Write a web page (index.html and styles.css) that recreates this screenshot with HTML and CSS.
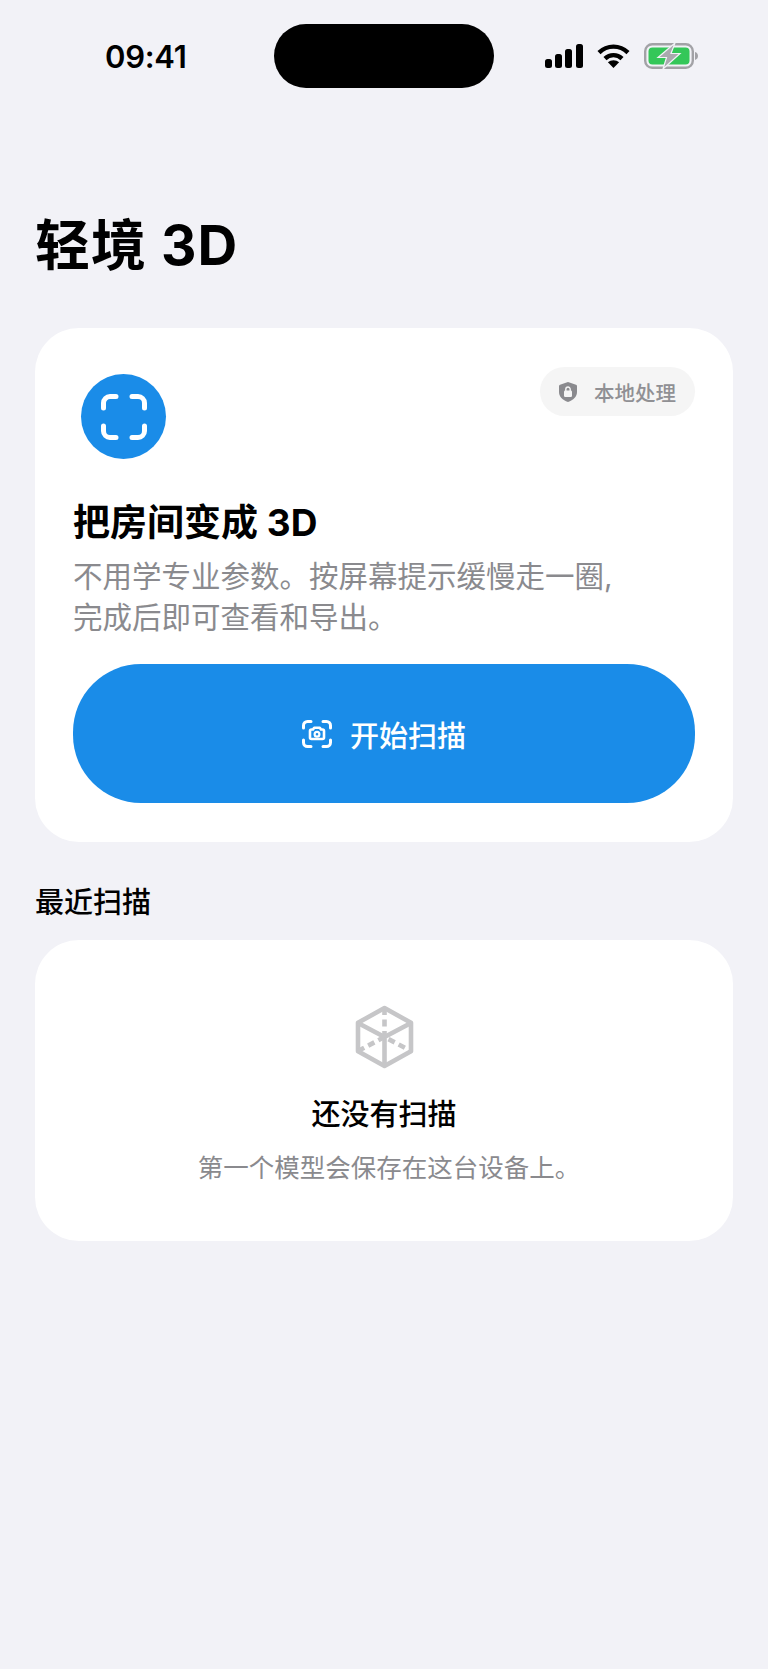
FILE: index.html
```html
<!DOCTYPE html>
<html lang="zh-CN">
<head>
    <meta charset="UTF-8">
    <meta name="viewport" content="width=device-width, initial-scale=1.0">
    <title>轻境 3D</title>
    <link rel="stylesheet" href="styles.css">
</head>
<body>
    <!-- Status bar -->
    <header class="status-bar">
        <span class="status-time">09:41</span>
        <div class="island"></div>
        <div class="status-icons">
            <svg class="icon-signal" width="38" height="24" viewBox="0 0 38 24" fill="#000">
                <rect x="0" y="15" width="7" height="9" rx="2.5"/>
                <rect x="10" y="10" width="7" height="14" rx="2.5"/>
                <rect x="20" y="5" width="7" height="19" rx="2.5"/>
                <rect x="31" y="0" width="7" height="24" rx="2.5"/>
            </svg>
            <svg class="icon-wifi" width="33" height="24" viewBox="0 0 33 24" fill="none" stroke="#000" stroke-width="4.4">
                <path d="M2 8.6C10.2 .6 22.8 .6 31 8.6"/>
                <path d="M8 14.6C12.8 10 20.2 10 25 14.6"/>
                <path d="M16.5 24l-5.6-5.7c3-2.7 8.2-2.7 11.2 0z" fill="#000" stroke="none"/>
            </svg>
            <svg class="icon-battery" width="54" height="26" viewBox="0 0 54 26">
                <rect x="1.2" y="1.2" width="47.6" height="23.6" rx="7" fill="none" stroke="#a2a2a6" stroke-width="2.4"/>
                <rect x="4.5" y="4.5" width="41" height="17" rx="4" fill="#34c759"/>
                <path d="M51 9c2 .6 3 2.2 3 4s-1 3.4-3 4z" fill="#a2a2a6"/>
                <path d="M31 0L14 14.500h8.500L19 26l17-15.500h-9z" fill="#a9a9ae" stroke="#f2f2f7" stroke-width="1.200"/>
            </svg>
        </div>
    </header>

    <main class="page">
        <h1 class="page-title">轻境 3D</h1>

        <section class="card scan-card">
            <div class="local-chip">
                <svg width="18" height="20" viewBox="0 0 18 20">
                    <path d="M9 0l8 2.800c.6.200 1 .800 1 1.400v5.800c0 4.600-3.600 8-9 10-5.400-2-9-5.400-9-10V4.200c0-.6.400-1.200 1-1.400z" fill="#8a8a8e"/>
                    <rect x="5" y="8.500" width="8" height="6.500" rx="1.200" fill="#f5f5f5"/>
                    <path d="M6.800 9V7.200a2.200 2.200 0 0 1 4.400 0V9" fill="none" stroke="#f5f5f5" stroke-width="1.400"/>
                </svg>
                <span>本地处理</span>
            </div>

            <div class="scan-badge">
                <svg width="46" height="46" viewBox="0 0 46 46" fill="none" stroke="#fff" stroke-width="5" stroke-linecap="round">
                    <path d="M2.500 14V9a6.500 6.500 0 0 1 6.500-6.500h6"/>
                    <path d="M31 2.500h6a6.500 6.500 0 0 1 6.500 6.500v5"/>
                    <path d="M2.500 32v5a6.500 6.500 0 0 0 6.500 6.500h6"/>
                    <path d="M31 43.500h6a6.500 6.500 0 0 0 6.500-6.500v-5"/>
                </svg>
            </div>

            <h2 class="scan-title">把房间变成 3D</h2>
            <p class="scan-desc">不用学专业参数。按屏幕提示缓慢走一圈,<br>完成后即可查看和导出。</p>

            <button class="start-button">
                <svg width="30" height="28" viewBox="0 0 30 28" fill="none" stroke="#fff" stroke-width="3" stroke-linecap="round" stroke-linejoin="round">
                    <path d="M1.500 8V5.500a4 4 0 0 1 4-4H9"/>
                    <path d="M21 1.500h3.500a4 4 0 0 1 4 4V8"/>
                    <path d="M1.500 20v2.500a4 4 0 0 0 4 4H9"/>
                    <path d="M21 26.500h3.500a4 4 0 0 0 4-4V20"/>
                    <path d="M9.500 9.500h1.500l1.200-1.800h5.600L19 9.500h1.500A1.500 1.500 0 0 1 22 11v6.500a1.500 1.500 0 0 1-1.500 1.500h-11A1.500 1.500 0 0 1 8 17.500V11a1.500 1.500 0 0 1 1.500-1.500z" stroke-width="2.600"/>
                    <circle cx="15" cy="14.200" r="2.400" stroke-width="2.200"/>
                </svg>
                <span>开始扫描</span>
            </button>
        </section>

        <h3 class="section-label">最近扫描</h3>

        <section class="card empty-card">
            <svg class="empty-icon" width="59" height="64" viewBox="0 0 59 64" fill="none" stroke="#c6c6c8" stroke-width="4.600" stroke-linejoin="round">
                <path d="M29.500 3L56 17.800V46.200L29.500 61L3 46.200V17.800z"/>
                <path d="M3 18L29.500 32L56 18M29.500 32V61"/>
                <path d="M29.500 3V32M3 46L29.500 32L56 46" stroke-dasharray="7 4.500"/>
            </svg>
            <h4 class="empty-title">还没有扫描</h4>
            <p class="empty-desc">第一个模型会保存在这台设备上。</p>
        </section>
    </main>
</body>
</html>
```

FILE: styles.css
```css
/* Reset */
* {
    margin: 0;
    padding: 0;
    box-sizing: border-box;
}

html, body {
    height: 100%;
}

body {
    background: #f2f2f7;
    color: #000;
    font-family: Inter, "Noto Sans CJK SC", sans-serif;
}

/* Status bar */
.status-bar {
    display: grid;
    grid-template-columns: 274px 220px 1fr;
    align-items: center;
    padding-top: 24px;
}

.status-time {
    padding-left: 105px;
    font-size: 31px;
    font-weight: 600;
    letter-spacing: -0.3px;
}

.island {
    height: 64px;
    background: #000;
    border-radius: 32px;
}

.status-icons {
    display: flex;
    align-items: center;
    gap: 14px;
    padding-left: 51px;
}

/* Page */
.page {
    padding: 0 35px;
}

.page-title {
    margin-top: 125px;
    margin-bottom: 51px;
    font-size: 55px;
    line-height: 64px;
    font-weight: 700;
    letter-spacing: 1px;
}

.card {
    background: #fff;
    border-radius: 44px;
}

/* Scan card */
.scan-card {
    position: relative;
    padding: 46px 38px 39px;
}

.local-chip {
    position: absolute;
    top: 39px;
    right: 38px;
    display: flex;
    align-items: center;
    gap: 17px;
    height: 49px;
    padding: 0 19px;
    background: #f5f5f5;
    border-radius: 25px;
    color: #909094;
    font-size: 20.500px;
    font-weight: 500;
}

.scan-badge {
    display: flex;
    align-items: center;
    justify-content: center;
    width: 85px;
    height: 85px;
    margin-left: 8px;
    background: #1a8ce8;
    border-radius: 50%;
}

.scan-title {
    margin-top: 39px;
    font-size: 37px;
    line-height: 50px;
    font-weight: 700;
}

.scan-desc {
    margin-top: 8px;
    color: #8a8a8e;
    font-size: 29.500px;
    line-height: 41px;
}

.start-button {
    display: flex;
    align-items: center;
    justify-content: center;
    gap: 18px;
    width: 100%;
    height: 139px;
    margin-top: 26px;
    background: #1a8ce8;
    border: none;
    border-radius: 68px;
    color: #fff;
    font-family: inherit;
    font-size: 29px;
    font-weight: 500;
}

/* Recent */
.section-label {
    margin-top: 41px;
    margin-bottom: 17px;
    font-size: 29px;
    line-height: 40px;
    font-weight: 500;
}

.empty-card {
    display: flex;
    flex-direction: column;
    align-items: center;
    padding: 65px 0 55px;
}

.empty-title {
    margin-top: 26px;
    font-size: 29px;
    line-height: 40px;
    font-weight: 500;
}

.empty-desc {
    margin-top: 15px;
    padding-left: 10px;
    color: #8a8a8e;
    font-size: 25.500px;
    line-height: 36px;
}
```
